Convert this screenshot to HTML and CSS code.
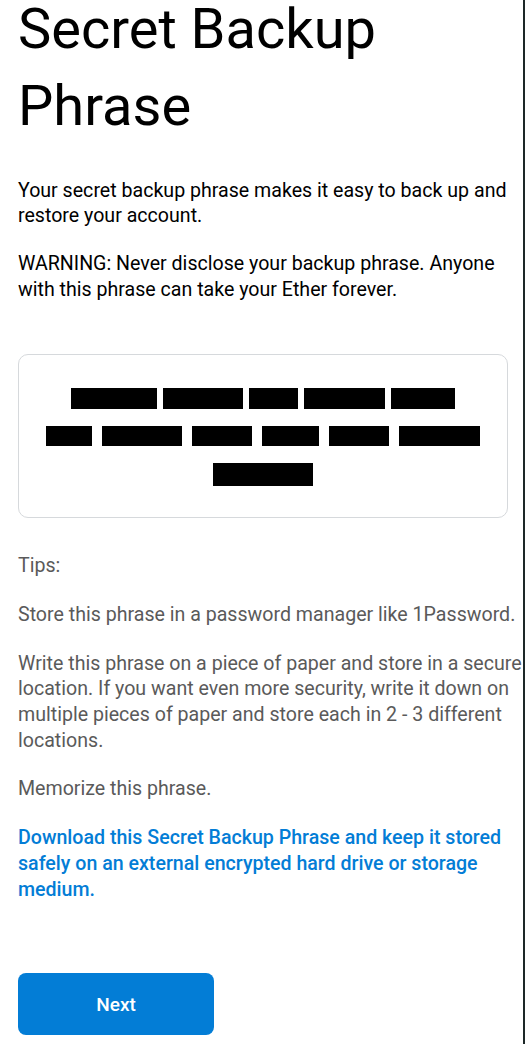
FILE: index.html
```html
<!DOCTYPE html>
<html lang="en">
<head>
<meta charset="utf-8">
<title>Secret Backup Phrase</title>
<link rel="stylesheet" href="styles.css">
</head>
<body>
<div class="page">
  <h1 class="title"><span class="title-line">Secret Backup</span><span class="title-line title-line-2">Phrase</span></h1>
  <p class="text">Your secret backup phrase makes it easy to back up and restore your account.</p>
  <p class="text">WARNING: Never disclose your backup phrase. Anyone with this phrase can take your Ether forever.</p>

  <div class="phrase-box">
    <div class="phrase-row row-1">
      <span class="redact" style="width:86px"></span>
      <span class="redact" style="width:80px"></span>
      <span class="redact" style="width:49px"></span>
      <span class="redact" style="width:81px"></span>
      <span class="redact" style="width:64px"></span>
    </div>
    <div class="phrase-row row-2">
      <span class="redact" style="width:46px"></span>
      <span class="redact" style="width:80px"></span>
      <span class="redact" style="width:60px"></span>
      <span class="redact" style="width:57px"></span>
      <span class="redact" style="width:60px"></span>
      <span class="redact" style="width:81px"></span>
    </div>
    <div class="phrase-row row-3">
      <span class="redact" style="width:100px"></span>
    </div>
  </div>

  <div class="tips">
    <p class="tip">Tips:</p>
    <p class="tip">Store this phrase in a password manager like 1Password.</p>
    <p class="tip">Write this phrase on a piece of paper and store in a secure location. If you want even more security, write it down on multiple pieces of paper and store each in 2 - 3 different locations.</p>
    <p class="tip">Memorize this phrase.</p>
    <p class="tip link">Download this Secret Backup Phrase and keep it stored safely on an external encrypted hard drive or storage medium.</p>
  </div>

  <button class="next-btn" type="button">Next</button>
</div>
</body>
</html>
```

FILE: styles.css
```css
html, body {
  margin: 0;
  padding: 0;
  background: #ffffff;
}

body {
  font-family: Roboto, "Noto Sans", "Liberation Sans", sans-serif;
  overflow: hidden;
}

.page {
  box-sizing: border-box;
  width: 525px;
  height: 1044px;
  padding: 0 0 0 18px;
  border-right: 2px solid #1d2828;
  overflow: hidden;
  display: flex;
  flex-direction: column;
  align-items: flex-start;
}

.title {
  margin: 0;
  font-size: 56px;
  font-weight: 400;
  color: #000000;
  display: flex;
  flex-direction: column;
}

.title-line {
  display: block;
  line-height: 58px;
}

.title-line-2 {
  margin-top: 19px;
}

.text {
  margin: 42.5px 0 0 0;
  font-size: 19.6px;
  line-height: 25.7px;
  color: #000000;
}

.text + .text {
  margin-top: 22.4px;
}

.phrase-box {
  box-sizing: border-box;
  align-self: stretch;
  margin: 51px 15px 0 0;
  height: 164px;
  border: 1.5px solid #d6d9dc;
  border-radius: 10px;
  padding: 33px 0 0 0;
  display: flex;
  flex-direction: column;
  align-items: center;
  gap: 17px;
}

.phrase-row {
  display: flex;
  justify-content: center;
  gap: 6px;
  height: 21px;
}

.row-2 {
  gap: 10px;
  height: 20px;
}

.row-3 {
  height: 23px;
}

.redact {
  display: block;
  height: 100%;
  background: #000000;
}

.tips {
  margin: 35.5px -10px 0 0;
  display: flex;
  flex-direction: column;
  gap: 23px;
}

.tip {
  margin: 0;
  font-size: 19.6px;
  line-height: 25.7px;
  color: #5a5a5a;
}

.link {
  color: #037dd6;
  font-weight: 500;
}

.next-btn {
  margin-top: 71px;
  width: 196px;
  height: 62px;
  border: none;
  border-radius: 8px;
  background: #037dd6;
  color: #ffffff;
  font-family: Roboto, "Noto Sans", "Liberation Sans", sans-serif;
  font-size: 19px;
  font-weight: 500;
  padding: 0;
}
```
